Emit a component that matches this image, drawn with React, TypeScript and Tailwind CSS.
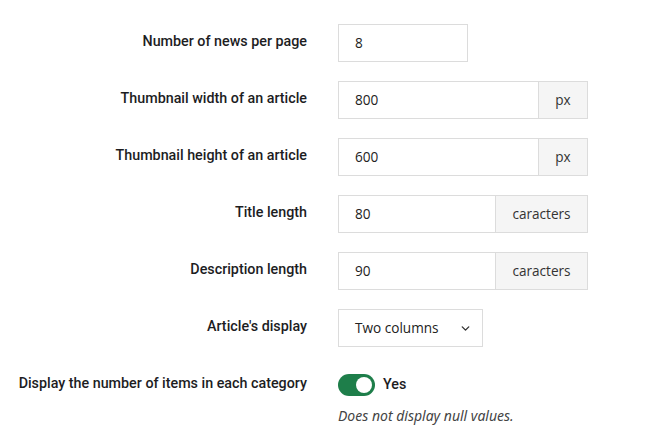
import { ChevronDown } from 'lucide-react';

const LABEL_FONT = { fontFamily: 'Roboto, "Noto Sans", sans-serif' };
const HELP_FONT = { fontFamily: '"Noto Sans", "Open Sans", sans-serif' };

function Label({ children }: { children: React.ReactNode }) {
  return (
    <div
      className="flex h-[38px] items-center justify-end pb-[3px] text-right text-[14.3px] font-medium text-[#1d1d1f]"
      style={LABEL_FONT}
    >
      {children}
    </div>
  );
}

function TextInput({ value, width }: { value: string; width: string }) {
  return (
    <div
      className={`flex h-[38px] items-center border border-[#dcdcdc] bg-white pl-4 text-[13.6px] text-[#222] ${width}`}
    >
      {value}
    </div>
  );
}

function AddonInput({ value, addon, inputWidth, addonWidth }: { value: string; addon: string; inputWidth: string; addonWidth: string }) {
  return (
    <div className="flex h-[38px]">
      <div className={`flex items-center border border-[#dcdcdc] bg-white pl-4 text-[13.6px] text-[#222] ${inputWidth}`}>
        {value}
      </div>
      <div
        className={`-ml-px flex items-center justify-center border border-[#dcdcdc] bg-[#f5f5f5] text-[13.6px] text-[#333] ${addonWidth}`}
      >
        {addon}
      </div>
    </div>
  );
}

export default function App() {
  return (
    <div className="min-h-[440px] w-[666px] bg-white pt-6" style={{ fontFamily: '"Open Sans", "Noto Sans", sans-serif' }}>
      <div className="grid grid-cols-[307px_auto] gap-x-[31px] gap-y-[19px]">
        <Label>Number of news per page</Label>
        <TextInput value="8" width="w-[130px]" />

        <Label>Thumbnail width of an article</Label>
        <AddonInput value="800" addon="px" inputWidth="w-[201px]" addonWidth="w-[50px]" />

        <Label>Thumbnail height of an article</Label>
        <AddonInput value="600" addon="px" inputWidth="w-[201px]" addonWidth="w-[50px]" />

        <Label>Title length</Label>
        <AddonInput value="80" addon="caracters" inputWidth="w-[158px]" addonWidth="w-[93px]" />

        <Label>Description length</Label>
        <AddonInput value="90" addon="caracters" inputWidth="w-[158px]" addonWidth="w-[93px]" />

        <Label>Article's display</Label>
        <div className="flex h-[38px] w-[145px] items-center justify-between border border-[#dcdcdc] bg-white pl-4 pr-2.5 text-[13.6px] text-[#222]">
          <span>Two columns</span>
          <ChevronDown size={13} strokeWidth={2.5} className="text-[#333]" />
        </div>

        <Label>Display the number of items in each category</Label>
        <div>
          <div className="flex h-[38px] items-center gap-[8px]">
            <div className="flex h-[22px] w-[37px] items-center justify-end rounded-full bg-[#1e7e4a] pr-[3px]">
              <div className="h-[16px] w-[16px] rounded-full bg-white" />
            </div>
            <span className="text-[14.3px] font-medium text-[#1d1d1f]" style={LABEL_FONT}>
              Yes
            </span>
          </div>
          <p className="mt-[1px] text-[14px] italic text-[#444]" style={HELP_FONT}>
            Does not display null values.
          </p>
        </div>
      </div>
    </div>
  );
}
